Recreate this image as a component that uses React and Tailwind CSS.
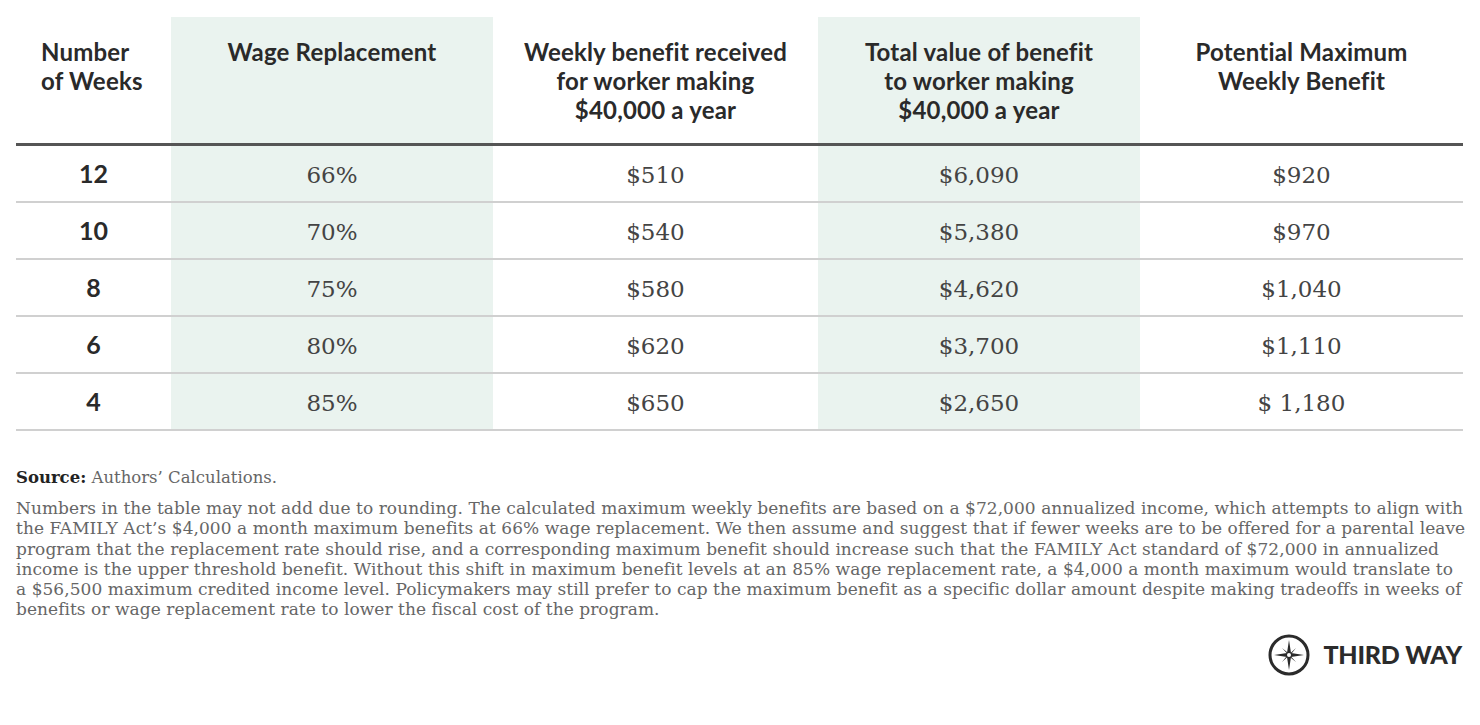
import React from 'react';

const rows = [
  { weeks: '12', rate: '66%', weekly: '$510', total: '$6,090', max: '$920' },
  { weeks: '10', rate: '70%', weekly: '$540', total: '$5,380', max: '$970' },
  { weeks: '8', rate: '75%', weekly: '$580', total: '$4,620', max: '$1,040' },
  { weeks: '6', rate: '80%', weekly: '$620', total: '$3,700', max: '$1,110' },
  { weeks: '4', rate: '85%', weekly: '$650', total: '$2,650', max: '$ 1,180' },
];

const headFont = { fontFamily: 'Lato, "Open Sans", sans-serif' };
const serif = { fontFamily: '"DejaVu Serif", "Liberation Serif", serif' };

const Logo = () => (
  <div className="flex items-center gap-[13px]">
    <svg width="42" height="42" viewBox="0 0 42 42">
      <circle cx="21" cy="21" r="19" fill="none" stroke="#2b2b2b" strokeWidth="3" />
      <path d="M21 6 L23 19 L36 21 L23 23 L21 36 L19 23 L6 21 L19 19 Z" fill="#2b2b2b" />
      <path d="M14 14 L21.5 20 L28 14 L22 21.5 L28 28 L20.5 22 L14 28 L20 20.5 Z" fill="#2b2b2b" />
      <circle cx="21" cy="21" r="2" fill="#fff" />
    </svg>
    <span className="text-[25px] font-black tracking-[-0.2px] text-[#2b2b2b] leading-none" style={headFont}>
      THIRD WAY
    </span>
  </div>
);

export default function App() {
  return (
    <div className="w-[1480px] h-[725px] bg-white text-[#333] overflow-hidden">
      <div className="pt-[17px] px-[16px]">
        {/* table */}
        <div className="w-[1447px]">
          <div className="grid grid-cols-[155px_322px_325px_322px_323px] h-[126px] text-[24px] font-bold leading-[29px] text-[#2a2a2a] tracking-[0.2px]" style={headFont}>
            <div className="pt-[20px] pl-[25px]">Number<br />of Weeks</div>
            <div className="bg-[#eaf3ef] pt-[20px] text-center">Wage Replacement</div>
            <div className="pt-[20px] text-center">Weekly benefit received<br />for worker making<br />$40,000 a year</div>
            <div className="bg-[#eaf3ef] pt-[20px] text-center">Total value of benefit<br />to worker making<br />$40,000 a year</div>
            <div className="pt-[20px] text-center">Potential Maximum<br />Weekly Benefit</div>
          </div>
          <div className="h-[3px] bg-[#555]" />
          {rows.map((r) => (
            <div key={r.weeks} className="border-b-2 border-[#d0d0d0]">
              <div className="grid grid-cols-[155px_322px_325px_322px_323px] h-[55px] items-center text-center">
                <div className="text-[25px] font-bold text-[#2a2a2a]" style={headFont}>{r.weeks}</div>
                <div className="bg-[#eaf3ef] h-full flex items-center justify-center pt-[3px] text-[23px] text-[#444]" style={serif}>{r.rate}</div>
                <div className="h-full flex items-center justify-center pt-[3px] text-[23px] text-[#444]" style={serif}>{r.weekly}</div>
                <div className="bg-[#eaf3ef] h-full flex items-center justify-center pt-[3px] text-[23px] text-[#444]" style={serif}>{r.total}</div>
                <div className="h-full flex items-center justify-center pt-[3px] text-[23px] text-[#444]" style={serif}>{r.max}</div>
              </div>
            </div>
          ))}
        </div>

        {/* notes */}
        <div className="mt-[37px] text-[#666]" style={serif}>
          <p className="text-[16.5px] leading-[20px]">
            <span className="font-bold text-[#222]">Source:</span> Authors’ Calculations.
          </p>
          <p className="mt-[10px] text-[17px] leading-[20.3px] whitespace-nowrap tracking-[0.05px]">
            Numbers in the table may not add due to rounding. The calculated maximum weekly benefits are based on a $72,000 annualized income, which attempts to align with<br />
            the FAMILY Act’s $4,000 a month maximum benefits at 66% wage replacement. We then assume and suggest that if fewer weeks are to be offered for a parental leave<br />
            program that the replacement rate should rise, and a corresponding maximum benefit should increase such that the FAMILY Act standard of $72,000 in annualized<br />
            income is the upper threshold benefit. Without this shift in maximum benefit levels at an 85% wage replacement rate, a $4,000 a month maximum would translate to<br />
            a $56,500 maximum credited income level. Policymakers may still prefer to cap the maximum benefit as a specific dollar amount despite making tradeoffs in weeks of<br />
            benefits or wage replacement rate to lower the fiscal cost of the program.
          </p>
        </div>

        <div className="flex justify-end mt-[14px] pr-[2px]">
          <Logo />
        </div>
      </div>
    </div>
  );
}
